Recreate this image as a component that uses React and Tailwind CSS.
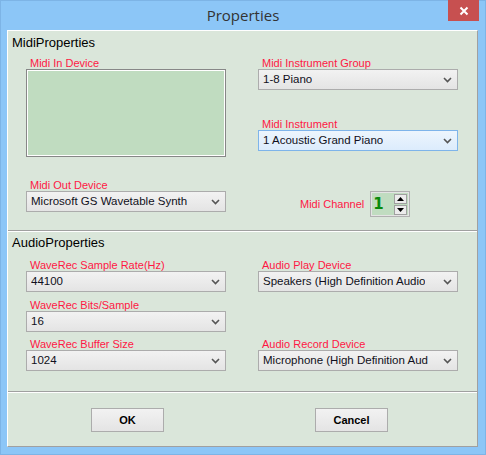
import React from "react";

const F = { fontFamily: '"Liberation Sans", Arial, sans-serif' };

function Chevron() {
  return (
    <svg width="9" height="6" viewBox="0 0 9 6" className="shrink-0">
      <path d="M1 1 L4.5 4.5 L8 1" fill="none" stroke="#555" strokeWidth="1.6" />
    </svg>
  );
}

function Label({ children, className = "" }) {
  return (
    <div className={"h-[13px] leading-[14px] text-[11px] text-[#ff1744] pl-[4px] whitespace-nowrap " + className}>
      {children}
    </div>
  );
}

function Select({ value, focused = false, className = "" }) {
  return (
    <div
      className={
        "h-[21px] w-[200px] flex items-center justify-between pl-[4px] pr-[5px] border text-[11.5px] text-[#101020] whitespace-nowrap " +
        (focused
          ? "border-[#7eb4ea] bg-gradient-to-b from-[#edf5fd] to-[#dcecfc] "
          : "border-[#acacac] bg-gradient-to-b from-[#f2f2f2] to-[#e4e4e4] ") +
        className
      }
    >
      <span className="overflow-hidden">{value}</span>
      <Chevron />
    </div>
  );
}

function Separator() {
  return <div className="h-[2px] border-t border-[#a0a0a0] bg-white" />;
}

function Button({ children, className = "" }) {
  return (
    <div
      className={
        "h-[24px] w-[73px] flex items-center justify-center border border-[#acacac] bg-gradient-to-b from-[#f2f2f2] to-[#e4e4e4] text-[11px] font-bold text-black " +
        className
      }
    >
      {children}
    </div>
  );
}

export default function App() {
  return (
    <div className="w-[486px] h-[455px] bg-[#8cc6f7] border border-[#7db4e6] flex flex-col" style={F}>
      {/* title bar */}
      <div className="h-[29px] grid grid-cols-[1fr_auto_1fr]">
        <div />
        <div
          className="pt-[4px] text-[15px] leading-[20px] text-[#333]"
          style={{ fontFamily: '"Open Sans", "Noto Sans", sans-serif' }}
        >
          Properties
        </div>
        <div className="flex justify-end">
          <div className="w-[31px] h-[21px] -mt-px bg-[#c75050] mr-[6px] flex items-center justify-center">
            <svg width="10" height="10" viewBox="0 0 10 10">
              <path d="M1.5 1.5 L8.5 8.5 M8.5 1.5 L1.5 8.5" stroke="#fff" strokeWidth="2" />
            </svg>
          </div>
        </div>
      </div>

      {/* client */}
      <div className="ml-[6px] w-[471px] h-[417px] border-l border-t border-white border-r border-b border-r-[#a0a0a0] border-b-[#a0a0a0] bg-[#dae6da] flex flex-col">
        {/* Midi */}
        <div className="h-[199px] flex flex-col">
          <div className="pt-[3px] pl-[4px] leading-[17px] text-[13px] text-black">MidiProperties</div>
          <div className="mt-[5px] pl-[18px] grid grid-cols-[200px_200px] gap-x-[32px]">
            <div className="flex flex-col">
              <Label>Midi In Device</Label>
              <div className="h-[88px] border border-[#878787] bg-[#c0dcc0] shadow-[inset_0_0_0_1px_#fff]" />
              <Label className="mt-[21px]">Midi Out Device</Label>
              <Select value="Microsoft GS Wavetable Synth" />
            </div>
            <div className="flex flex-col">
              <Label>Midi Instrument Group</Label>
              <Select value="1-8 Piano" />
              <Label className="mt-[27px]">Midi Instrument</Label>
              <Select value="1 Acoustic Grand Piano" focused />
              <div className="mt-[40px] h-[26px] flex items-center pl-[42px]">
                <span className="text-[11px] text-[#ff1744] whitespace-nowrap">Midi Channel</span>
                <div className="ml-[6px] w-[40px] h-[26px] border border-[#b0b0b0] shadow-[inset_0_0_0_1px_#e4e4e4] bg-[#c0dcc0] flex items-center pl-[2px]">
                  <span className="text-[15px] font-bold text-[#0a8a0a] w-[21px]" style={{ fontFamily: '"DejaVu Sans", sans-serif' }}>1</span>
                  <div className="flex flex-col gap-[1px]">
                    <div className="w-[13px] h-[10px] bg-[#ececec] border border-[#a0a0a0] flex items-center justify-center">
                      <svg width="7" height="4" viewBox="0 0 7 4"><path d="M0 4 L3.5 0 L7 4 Z" fill="#000" /></svg>
                    </div>
                    <div className="w-[13px] h-[10px] bg-[#ececec] border border-[#a0a0a0] flex items-center justify-center">
                      <svg width="7" height="4" viewBox="0 0 7 4"><path d="M0 0 L3.5 4 L7 0 Z" fill="#000" /></svg>
                    </div>
                  </div>
                </div>
              </div>
            </div>
          </div>
        </div>

        <Separator />

        {/* Audio */}
        <div className="h-[159px] flex flex-col">
          <div className="pt-[2px] pl-[4px] leading-[17px] text-[13px] text-black">AudioProperties</div>
          <div className="mt-[7px] pl-[18px] grid grid-cols-[200px_200px] gap-x-[32px]">
            <div className="flex flex-col">
              <Label>WaveRec Sample Rate(Hz)</Label>
              <Select value="44100" />
              <Label className="mt-[6px]">WaveRec Bits/Sample</Label>
              <Select value="16" />
              <Label className="mt-[5px]">WaveRec Buffer Size</Label>
              <Select value="1024" />
            </div>
            <div className="flex flex-col">
              <Label>Audio Play Device</Label>
              <Select value="Speakers (High Definition Audio" />
              <Label className="mt-[45px]">Audio Record Device</Label>
              <Select value="Microphone (High Definition Aud" />
            </div>
          </div>
        </div>

        <Separator />

        {/* Buttons */}
        <div className="h-[53px] pt-[15px] pl-[83px] flex">
          <Button>OK</Button>
          <Button className="ml-[151px]">Cancel</Button>
        </div>
      </div>
    </div>
  );
}
